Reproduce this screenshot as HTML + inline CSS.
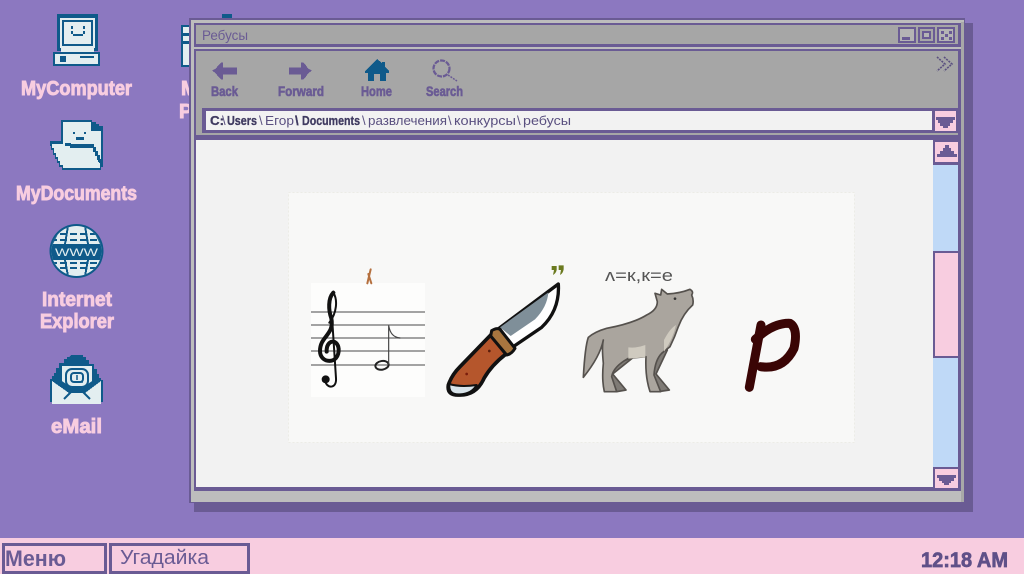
<!DOCTYPE html>
<html lang="ru"><head><meta charset="utf-8"><title>Ребусы</title>
<style>
html,body{margin:0;padding:0;background:#8c78c0;width:1024px;height:574px;overflow:hidden}
svg{display:block}
text{font-family:"Liberation Sans","Noto Sans CJK SC",sans-serif}
.lbl{font-weight:bold;fill:#f8cde0;stroke:#f8cde0;stroke-width:.9px;font-size:20px}
.tb{font-weight:bold;fill:#6a5b94;stroke:#6a5b94;stroke-width:.6px;font-size:13.5px}
.ad{font-size:13px;fill:#5a5080}
.adb{font-size:13px;font-weight:bold;fill:#3f3a60;stroke:#3f3a60;stroke-width:.3px}
</style></head><body>
<svg width="1024" height="574" viewBox="0 0 1024 574" xmlns="http://www.w3.org/2000/svg">
<defs>
<clipPath id="gl"><circle cx="76.500" cy="251" r="25"/></clipPath>
</defs>
<rect width="1024" height="574" fill="#8c78c0"/>

<!-- MyComputer icon -->
<g shape-rendering="crispEdges">
<rect x="57" y="14" width="41" height="37" fill="#0f5a8a"/>
<rect x="60" y="18" width="35" height="30" fill="#e3eef0"/>
<rect x="62" y="20" width="31" height="26" fill="#0f5a8a"/>
<rect x="64" y="22" width="27" height="22" fill="#e3eef0"/>
<rect x="71" y="26" width="2" height="3" fill="#0f5a8a"/><rect x="83" y="26" width="2" height="3" fill="#0f5a8a"/>
<rect x="71" y="31" width="2" height="3" fill="#0f5a8a"/><rect x="83" y="31" width="2" height="3" fill="#0f5a8a"/>
<rect x="73" y="34" width="10" height="2" fill="#0f5a8a"/>
<rect x="61" y="48" width="33" height="4" fill="#e3eef0"/>
<rect x="53" y="52" width="47" height="14" fill="#0f5a8a"/>
<rect x="55" y="54" width="43" height="10" fill="#e3eef0"/>
<rect x="60" y="56" width="6" height="6" fill="#0f5a8a"/>
<rect x="80" y="56" width="14" height="2" fill="#0f5a8a"/>
</g>
<text class="lbl" x="21" y="95" textLength="111" lengthAdjust="spacingAndGlyphs">MyComputer</text>

<!-- MyDocuments icon -->
<g shape-rendering="crispEdges">
<path d="M61 120H92V122H96V124H99V126H103V167H101V170H62V167H59V163H57V159H55V155H53V150H51V146H50V141H61Z" fill="#0f5a8a"/>
<path d="M63 122H91V131H101V160H63Z" fill="#e3eef0"/>
<path d="M52 144H65V147H92V150H94V154H96V158H98V162H100V168H63V165H60V161H58V157H56V153H54V148H52Z" fill="#e3eef0"/>
<rect x="73" y="132" width="2" height="2" fill="#0f5a8a"/><rect x="84" y="132" width="2" height="2" fill="#0f5a8a"/>
<rect x="76" y="137" width="8" height="3" fill="#0f5a8a"/>
<path d="M65 143H71V144H94V147H96V151H98V155H100V159H101V163H99V160H97V156H95V152H93V148H70V146H65Z" fill="#0f5a8a"/>
</g>
<text class="lbl" x="16" y="200" textLength="121" lengthAdjust="spacingAndGlyphs">MyDocuments</text>

<!-- Internet Explorer icon -->
<circle cx="76.500" cy="251" r="27" fill="#0f5a8a"/>
<g clip-path="url(#gl)">
<rect x="50" y="226" width="54" height="50" fill="#e3eef0"/>
<g fill="none" stroke="#0f5a8a" stroke-width="2" shape-rendering="crispEdges">
<path d="M50 234H104M50 240H104M50 268H104M50 263H104" stroke-dasharray="7 3"/>
<path d="M60 228L52 244M93 228L101 244M60 276L52 260M93 276L101 260M68 226L65 244M85 226L88 244M68 276L65 260M85 276L88 260"/>
</g>
<rect x="50" y="244" width="54" height="16" fill="#0f5a8a"/>
</g>
<text x="55" y="256" font-size="11" fill="#e3eef0" textLength="43" lengthAdjust="spacingAndGlyphs">WWW</text>
<text class="lbl" x="42" y="306" textLength="70" lengthAdjust="spacingAndGlyphs">Internet</text>
<text class="lbl" x="40" y="328" textLength="74" lengthAdjust="spacingAndGlyphs">Explorer</text>

<!-- eMail icon -->
<g shape-rendering="crispEdges">
<path d="M71 355h12v2h3v3h3v4h5v5h3v5h2v4h2v2h2v22h-2v2H52v-2h-2v-23h2v-3h2v-3h2v-5h3v-5h5v-4h3v-2h2z" fill="#0f5a8a"/>
<path d="M62 366h30v16l-8 6H70l-8-6z" fill="#e3eef0"/>
<path d="M52 381l17 12h16l16-12v23H52z" fill="#e3eef0"/>
</g>
<rect x="66" y="369" width="22" height="18" rx="6" fill="none" stroke="#0f5a8a" stroke-width="2"/>
<rect x="71" y="373" width="12" height="9" rx="3" fill="none" stroke="#0f5a8a" stroke-width="2"/>
<path d="M77 375v5M83 382h-8" stroke="#0f5a8a" stroke-width="1.500" fill="none"/>
<path d="M60 381l9 6 3 3h10l3-3 9-6M64 399l8-8M90 399l-8-8" fill="none" stroke="#0f5a8a" stroke-width="2"/>
<text class="lbl" x="51" y="433" textLength="51" lengthAdjust="spacingAndGlyphs">eMail</text>

<!-- icon behind window -->
<g shape-rendering="crispEdges">
<rect x="222" y="14" width="10" height="6" fill="#0f5a8a"/>
<rect x="181" y="25" width="9" height="42" fill="#0f5a8a"/>
<rect x="183" y="27" width="7" height="6" fill="#e3eef0"/>
<rect x="183" y="36" width="7" height="5" fill="#e3eef0"/>
<rect x="183" y="44" width="7" height="21" fill="#e3eef0"/>
</g>
<text class="lbl" x="181" y="95">M</text>
<text class="lbl" x="179" y="118">P</text>

<!-- window -->
<g shape-rendering="crispEdges">
<rect x="194" y="23" width="779" height="489" fill="#6a5b94"/>
<rect x="189" y="18" width="776" height="485" fill="#6a5b94"/>
<rect x="191" y="20" width="773" height="482" fill="#bdbdbd"/>
<rect x="961" y="22" width="3" height="480" fill="#a8a8a8"/>
<rect x="194" y="23" width="767" height="24" fill="#6a5b94"/>
<rect x="196" y="25" width="762" height="19" fill="#a6a6a6"/>
<rect x="194" y="49" width="767" height="91" fill="#6a5b94"/>
<rect x="196" y="51" width="762" height="57" fill="#a6a6a6"/>
<rect x="196" y="108" width="6" height="25" fill="#a6a6a6"/>
<rect x="196" y="133" width="762" height="2" fill="#a6a6a6"/>
<!-- title buttons -->
<rect x="898" y="27" width="18" height="16" fill="#6a5b94"/><rect x="900" y="29" width="14" height="12" fill="#b4b4b4"/><rect x="902" y="37" width="8" height="3" fill="#6a5b94"/>
<rect x="918" y="27" width="17" height="16" fill="#6a5b94"/><rect x="920" y="29" width="13" height="12" fill="#a6a6a6"/><rect x="922" y="31" width="9" height="8" fill="#6a5b94"/><rect x="924" y="33" width="5" height="4" fill="#b4b4b4"/>
<rect x="937" y="27" width="18" height="16" fill="#6a5b94"/><rect x="939" y="29" width="14" height="12" fill="#b4b4b4"/>
<path d="M941 31h3v3h-3zM949 31h3v3h-3zM945 34h3v3h-3zM941 37h3v3h-3zM949 37h3v3h-3z" fill="#6a5b94"/>
</g>
<text x="202" y="40" font-size="13.500" fill="#6a5b94" textLength="46" lengthAdjust="spacingAndGlyphs">Ребусы</text>
<path d="M937 57l8 7-8 7M944 57l8 7-8 7" fill="none" stroke="#5a4f80" stroke-width="1.600" stroke-dasharray="2 1"/>

<!-- toolbar icons -->
<path d="M212 70.500l4-2 2-3 3-3h2v5h14v7h-14v5h-2l-3-3-2-3z" fill="#6a5b94" shape-rendering="crispEdges"/>
<path d="M312 70.500l-4-2-2-3-3-3h-2v5h-12v7h12v5h2l3-3 2-3z" fill="#6a5b94" shape-rendering="crispEdges"/>
<path d="M377 59l5 4v-1h3v5l4 4v2h-3v8h-6v-7h-6v7h-6v-8h-3v-2z" fill="#0f5a8a" shape-rendering="crispEdges"/>
<circle cx="441.500" cy="68.500" r="8" fill="none" stroke="#6a5b94" stroke-width="2.200" stroke-dasharray="5 1"/>
<path d="M448 75l9 6" stroke="#6a5b94" stroke-width="1.500" stroke-dasharray="2 1"/>
<text class="tb" x="211" y="96" textLength="27" lengthAdjust="spacingAndGlyphs">Back</text>
<text class="tb" x="278" y="96" textLength="46" lengthAdjust="spacingAndGlyphs">Forward</text>
<text class="tb" x="361" y="96" textLength="31" lengthAdjust="spacingAndGlyphs">Home</text>
<text class="tb" x="426" y="96" textLength="37" lengthAdjust="spacingAndGlyphs">Search</text>

<!-- address -->
<g shape-rendering="crispEdges">
<rect x="202" y="108" width="756" height="25" fill="#6a5b94"/>
<rect x="206" y="111" width="726" height="19" fill="#f2f2f2"/>
<rect x="935" y="111" width="21" height="20" fill="#f8cde0"/>
<path d="M936 117h19v3h-2v3h-3v3h-2v2h-5v-2h-3v-3h-2v-3h-2z" fill="#6a5b94"/>
</g>
<text class="adb" x="210" y="125" textLength="14" lengthAdjust="spacingAndGlyphs">C:</text>
<text class="ad" x="222" y="125">\</text>
<text class="adb" x="227" y="125" textLength="30" lengthAdjust="spacingAndGlyphs">Users</text>
<text class="ad" x="259" y="125">\</text>
<text class="ad" x="265" y="125" textLength="29" lengthAdjust="spacingAndGlyphs">Егор</text>
<text class="adb" x="295" y="125">\</text>
<text class="adb" x="302" y="125" textLength="58" lengthAdjust="spacingAndGlyphs">Documents</text>
<text class="ad" x="362" y="125">\</text>
<text class="ad" x="368" y="125" textLength="79" lengthAdjust="spacingAndGlyphs">развлечения</text>
<text class="ad" x="448" y="125">\</text>
<text class="ad" x="454" y="125" textLength="62" lengthAdjust="spacingAndGlyphs">конкурсы</text>
<text class="ad" x="517" y="125">\</text>
<text class="ad" x="523" y="125" textLength="48" lengthAdjust="spacingAndGlyphs">ребусы</text>

<!-- content -->
<g shape-rendering="crispEdges">
<rect x="194" y="140" width="767" height="351" fill="#6a5b94"/>
<rect x="196" y="140" width="737" height="347" fill="#f2f2f2"/>
<rect x="933" y="140" width="27" height="351" fill="#6a5b94"/>
<rect x="935" y="142" width="23" height="20" fill="#f8cde0"/>
<path d="M945 145h4v3h2v3h3v3h3v3h-20v-3h3v-3h3v-3h2z" fill="#6a5b94"/>
<rect x="933" y="165" width="25" height="302" fill="#bfd9f7"/>
<rect x="933" y="251" width="27" height="107" fill="#6a5b94"/>
<rect x="935" y="253" width="23" height="103" fill="#f8cde0"/>
<rect x="935" y="469" width="23" height="19" fill="#f8cde0"/>
<path d="M937 475h19v3h-2v3h-3v2h-2v2h-5v-2h-2v-2h-3v-3h-2z" fill="#6a5b94"/>
</g>

<!-- picture panel -->
<rect x="288.500" y="192.500" width="566" height="250" fill="#f8f8f7" stroke="#ecece6" stroke-dasharray="2 2"/>

<!-- music -->
<rect x="311" y="283" width="114" height="114" fill="#fdfdfc"/>
<g stroke="#6e6e6e" stroke-width="1.200"><path d="M311 312h114M311 325h114M311 338h114M311 351h114M311 365h114"/></g>
<g transform="translate(300 250) scale(.33333)" fill="none" stroke-linecap="round">
<path d="M100 128C84 145 85 180 94 205C104 255 60 258 60 303C60 342 118 345 116 297C113 265 78 268 80 305" stroke="#111" stroke-width="12"/>
<path d="M100 128C114 150 110 190 88 218M96 200L108 385C110 415 85 415 78 400" stroke="#111" stroke-width="6"/>
<circle cx="77" cy="388" r="12" fill="#111"/>
<ellipse cx="246" cy="346" rx="20" ry="13" stroke="#222" stroke-width="6" transform="rotate(-10 246 346)"/>
<path d="M266 342V226C270 250 280 262 300 264" stroke="#444" stroke-width="3.500"/>
<path d="M212 58L202 100M205 72L214 100" stroke="#b5703f" stroke-width="6"/>
</g>

<!-- knife -->
<g transform="translate(300 250) scale(.33333)" stroke-linejoin="round">
<path d="M597 235L775 102Q780 180 725 232L640 290Z" fill="#fff" stroke="#111" stroke-width="10"/>
<path d="M600 232L745 127Q742 170 705 208L632 258Z" fill="#7f8f99"/>
<path d="M572 255L618 312Q575 345 552 385Q530 435 480 435Q440 438 445 405Q455 375 480 350Z" fill="#b5562c" stroke="#111" stroke-width="11"/>
<path d="M448 402Q480 412 530 405Q515 432 480 433Q445 436 448 402Z" fill="#d8e4ea" stroke="#111" stroke-width="6"/>
<path d="M575 242Q590 232 600 238L645 295Q635 312 620 315L572 258Z" fill="#a8763f" stroke="#111" stroke-width="9"/>
<circle cx="568" cy="303" r="4" fill="#5a1d0c"/><circle cx="500" cy="372" r="4" fill="#7a1d0c"/>
<path d="M755 48h15v12q-2 10-11 15l3-15h-7zM776 46h15v12q-2 12-11 17l3-15h-7z" fill="#6b7a1f"/>
</g>

<!-- wolf -->
<text x="605" y="281" font-size="16.500" fill="#555" textLength="68" lengthAdjust="spacingAndGlyphs">ʌ=к,к=е</text>
<g transform="translate(570 250) scale(.33333)" stroke-linejoin="round">
<path d="M190 322L128 372 168 420 140 425 120 380 140 340Z" fill="#7f7b76" stroke="#55514d" stroke-width="5"/>
<path d="M292 300L258 372 298 420 265 425 245 370 262 300Z" fill="#7f7b76" stroke="#55514d" stroke-width="5"/>
<path d="M40 382Q45 290 55 262Q75 245 110 235Q190 220 230 195Q262 180 262 155L255 130 272 135 275 118 292 132Q330 130 360 118Q372 125 365 135Q372 150 368 165Q340 190 325 230Q315 260 300 290L275 310Q255 330 252 375L272 425H240Q225 380 228 320L175 325Q130 350 125 380L140 425H103Q95 390 100 340Q95 290 100 270Q90 320 40 382Z" fill="#aaa59e" stroke="#55514d" stroke-width="5"/>
<path d="M175 292Q200 295 226 285L226 322 175 326Z" fill="#cfcabf"/>
<path d="M282 270Q300 235 318 225 310 265 282 305Z" fill="#cfcabf"/>
<circle cx="315" cy="146" r="4" fill="#333"/>
</g>

<!-- letter p -->
<g transform="translate(570 250) scale(.33333)" fill="none" stroke="#3a0505" stroke-width="27" stroke-linecap="round" stroke-linejoin="round">
<path d="M573 225L538 412"/>
<path d="M556 268Q610 218 660 220Q685 235 672 295Q640 360 572 350"/>
</g>

<!-- taskbar -->
<g shape-rendering="crispEdges">
<rect x="0" y="538" width="1024" height="36" fill="#f8cde0"/>
<rect x="3.500" y="544.500" width="102" height="28" fill="none" stroke="#6a5b94" stroke-width="3"/>
<rect x="110.500" y="544.500" width="138" height="28" fill="none" stroke="#6a5b94" stroke-width="3"/>
</g>
<text x="5" y="566" font-size="22" font-weight="bold" fill="#6a5b94" textLength="61" lengthAdjust="spacingAndGlyphs">Меню</text>
<text x="120" y="564" font-size="20" fill="#6a5b94" textLength="89" lengthAdjust="spacingAndGlyphs">Угадайка</text>
<text x="921" y="567" font-size="21" font-weight="bold" fill="#5f5088" stroke="#5f5088" stroke-width=".7" textLength="87" lengthAdjust="spacingAndGlyphs">12:18 AM</text>
</svg>
</body></html>
